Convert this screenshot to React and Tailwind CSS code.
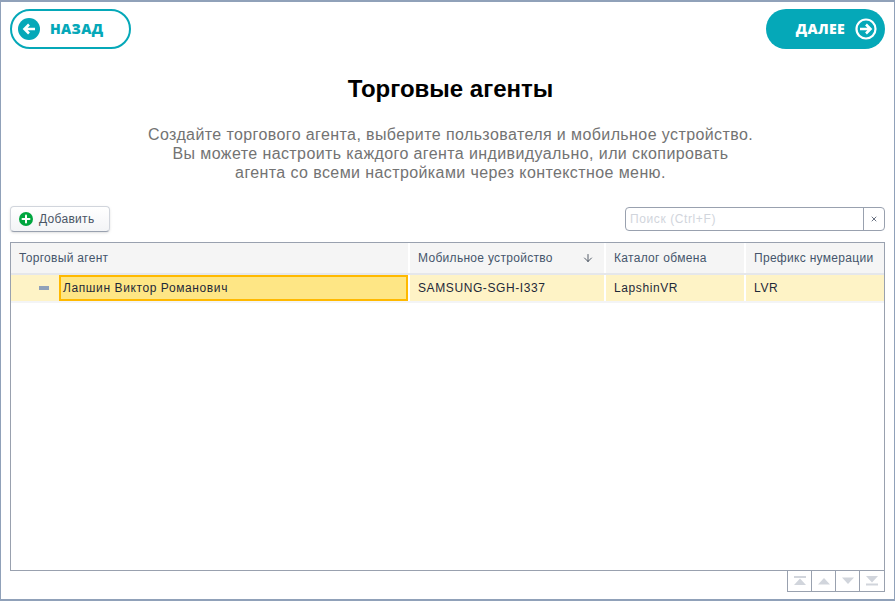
import { ArrowDown, Plus, X } from "lucide-react";

const sans = "font-['Liberation_Sans',Arial,sans-serif]";

function CircleArrow({ dir, ring, arrow, fill }) {
  return (
    <svg viewBox="0 0 22 22" className="size-[22px] shrink-0">
      <circle cx="11" cy="11" r={ring ? 9.5 : 11} fill={fill} stroke={ring} strokeWidth={ring ? 2.2 : 0} />
      <path
        d={dir === "left" ? "M17 11H7M11 6.5 6.5 11l4.5 4.5" : "M5 11h10M11 6.5l4.5 4.5-4.5 4.5"}
        fill="none"
        stroke={arrow}
        strokeWidth="2.6"
      />
    </svg>
  );
}

function PagerButton({ path }) {
  return (
    <div className="flex h-5 w-6 items-center justify-center border-r border-gray-400 last:border-r-0">
      <svg viewBox="0 0 14 10" className="h-2.5 w-3.5 fill-gray-300">
        <path d={path} />
      </svg>
    </div>
  );
}

function HeaderCell({ className, children }) {
  return (
    <div className={`flex items-center border-r-2 border-white px-2 text-xs tracking-wide text-slate-600 last:border-r-0 ${className}`}>
      {children}
    </div>
  );
}

export default function App() {
  return (
    <div className={`flex h-screen w-screen flex-col border-y border-slate-400 bg-white px-2.5 pt-2 pb-2 ring-1 ring-inset ring-slate-400 ${sans}`}>
      <div className="flex justify-between">
        <button className="flex h-10 w-[121px] items-center gap-2.5 rounded-full border-2 border-[#05a8b8] pl-1.5 font-['Open_Sans',sans-serif] text-sm font-extrabold tracking-wide text-[#05a8b8]">
          <CircleArrow dir="left" fill="#05a8b8" arrow="#fff" />
          НАЗАД
        </button>
        <button className="flex h-10 w-[119px] items-center justify-end gap-2.5 rounded-full bg-[#05a8b8] pr-2 font-['Open_Sans',sans-serif] text-sm font-extrabold tracking-wide text-white">
          ДАЛЕЕ
          <CircleArrow dir="right" fill="none" ring="#fff" arrow="#fff" />
        </button>
      </div>

      <h1 className="mt-6 pl-1.5 text-center text-2xl font-bold text-black">Торговые агенты</h1>

      <p className="mt-5 pl-1.5 text-center text-base leading-[19px] tracking-wide text-neutral-500">
        Создайте торгового агента, выберите пользователя и мобильное устройство.
        <br />
        Вы можете настроить каждого агента индивидуально, или скопировать
        <br />
        агента со всеми настройками через контекстное меню.
      </p>

      <div className="mt-6 flex items-center justify-between">
        <button className="flex h-[26px] w-[100px] items-center gap-1.5 rounded-sm border border-gray-300 border-b-gray-400 bg-gradient-to-b from-white to-gray-100 pl-2 text-xs tracking-wide text-gray-600 shadow-sm">
          <span className="flex size-3.5 items-center justify-center rounded-full bg-green-600">
            <Plus className="size-3 text-white" strokeWidth={4} />
          </span>
          Добавить
        </button>
        <div className="flex h-6 w-[260px] rounded-sm border border-gray-400 text-xs">
          <span className="flex flex-1 items-center border-r border-gray-400 pl-1 tracking-wider text-gray-300">Поиск (Ctrl+F)</span>
          <span className="flex w-5 items-center justify-center text-gray-500">
            <X className="size-2" strokeWidth={3} />
          </span>
        </div>
      </div>

      <div className="mt-2.5 flex flex-1 flex-col border border-gray-400">
        <div className="flex h-8 border-b-2 border-gray-200 bg-neutral-100">
          <HeaderCell className="w-[399px]">Торговый агент</HeaderCell>
          <HeaderCell className="w-[196px] justify-between pr-2.5">
            Мобильное устройство <ArrowDown className="size-3 text-gray-800" strokeWidth={1.5} />
          </HeaderCell>
          <HeaderCell className="w-[140px]">Каталог обмена</HeaderCell>
          <HeaderCell className="flex-1">Префикс нумерации</HeaderCell>
        </div>
        <div className="flex h-7 border-b-2 border-gray-100 bg-amber-100 text-xs tracking-wider text-gray-800">
          <div className="flex w-[399px] items-center border-r-2 border-white">
            <span className="ml-7 h-1 w-2.5 bg-slate-400" />
            <div className="ml-2.5 flex h-full flex-1 items-center border-2 border-amber-400 bg-amber-200 pl-0.5">
              Лапшин Виктор Романович
            </div>
          </div>
          <div className="flex w-[196px] items-center border-r-2 border-white px-2">SAMSUNG-SGH-I337</div>
          <div className="flex w-[140px] items-center border-r-2 border-white px-2">LapshinVR</div>
          <div className="flex flex-1 items-center px-2">LVR</div>
        </div>
      </div>

      <div className="flex justify-end">
        <div className="flex border-x border-b border-gray-400">
          <PagerButton path="M1 0h12v2H1zM7 2.5l6 6.5H1z" />
          <PagerButton path="M7 2l6 6.5H1z" />
          <PagerButton path="M1 1.5h12L7 8z" />
          <PagerButton path="M1 0h12L7 6.5zM1 7.5h12v2H1z" />
        </div>
      </div>
    </div>
  );
}
